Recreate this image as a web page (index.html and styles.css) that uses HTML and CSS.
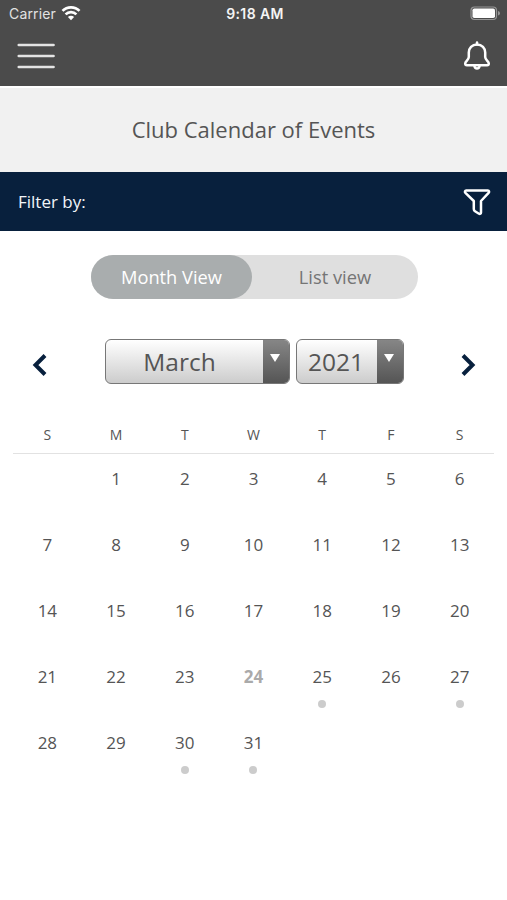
FILE: index.html
```html
<!DOCTYPE html>
<html lang="en">
<head>
<meta charset="utf-8">
<title>Club Calendar of Events</title>
<link rel="stylesheet" href="styles.css">
</head>
<body>
<header class="top">
  <div class="status">
    <div class="carrier"><span class="carrier-name">Carrier</span>
      <svg class="wifi" width="20" height="15" viewBox="0 0 20 15"><g fill="none" stroke="#fff" stroke-width="2.7"><path d="M1.500 4.900a12 12 0 0 1 17 0"/><path d="M4.600 8.400a7.600 7.600 0 0 1 10.800 0"/></g><path fill="#fff" d="M6.900 11a4.400 4.400 0 0 1 6.200 0L10 14.300z"/></svg>
    </div>
    <div class="time">9:18 AM</div>
    <svg class="battery" width="31" height="15" viewBox="0 0 31 15"><rect x="1" y="1" width="25.500" height="12.500" rx="3.500" fill="none" stroke="#969696" stroke-width="1.200"/><rect x="2.500" y="2.500" width="22.500" height="9.500" rx="1.800" fill="#fff"/><path d="M28 5v4.600q2-.6 2-2.300T28 5z" fill="#969696"/></svg>
  </div>
  <nav class="bar">
    <svg width="38" height="28" viewBox="0 0 38 28"><path d="M1.800 3h34.700M1.800 14h34.700M1.800 25h34.700" stroke="#e4e4e4" stroke-width="2.700" stroke-linecap="round"/></svg>
    <svg width="28" height="32" viewBox="0 0 28 32"><g fill="none" stroke="#fff" stroke-width="2.500" stroke-linecap="round" stroke-linejoin="round"><path d="M14 2.500v2"/><path d="M14 4.500c-5 0-8.200 3.500-8.200 8v4.500c0 3-3.600 4.500-3.600 6.500 0 1.200.7 1.700 1.700 1.700h20.200c1 0 1.700-.5 1.700-1.700 0-2-3.600-3.500-3.600-6.500v-4.500c0-4.500-3.200-8-8.200-8z"/><path d="M11.500 26.500a2.600 2.800 0 0 0 5 0"/></g></svg>
  </nav>
</header>
<h1 class="title">Club Calendar of Events</h1>
<section class="filter">
  <span>Filter by:</span>
  <svg width="28" height="28" viewBox="0 0 28 28"><path d="M3.200 2.500h21.600c1.400 0 1.700 1.500.8 2.400L18 13v11.500c0 1.200-1 1.700-2 1.200l-4-2.400c-.8-.5-1.200-1.300-1.200-2.200V13L2.400 4.900c-.9-.9-.5-2.400.8-2.400z" fill="none" stroke="#fff" stroke-width="2.500" stroke-linejoin="round"/></svg>
</section>
<main>
  <div class="toggle"><div class="option active">Month View</div><div class="option">List view</div></div>
  <div class="picker">
    <svg width="16" height="24" viewBox="0 0 16 24"><path d="M13 2.500L3.500 12l9.500 9.500" fill="none" stroke="#08203d" stroke-width="4"/></svg>
    <div class="selects">
      <div class="select month"><span class="value">March</span><span class="drop"><i class="triangle"></i></span></div>
      <div class="select year"><span class="value">2021</span><span class="drop"><i class="triangle"></i></span></div>
    </div>
    <svg width="16" height="24" viewBox="0 0 16 24"><path d="M3 2.500l9.500 9.500L3 21.500" fill="none" stroke="#08203d" stroke-width="4"/></svg>
  </div>
  <div class="week-head"><span>S</span><span>M</span><span>T</span><span>W</span><span>T</span><span>F</span><span>S</span></div>
  <div class="days">
    <div class="day"></div><div class="day">1</div><div class="day">2</div><div class="day">3</div><div class="day">4</div><div class="day">5</div><div class="day">6</div>
    <div class="day">7</div><div class="day">8</div><div class="day">9</div><div class="day">10</div><div class="day">11</div><div class="day">12</div><div class="day">13</div>
    <div class="day">14</div><div class="day">15</div><div class="day">16</div><div class="day">17</div><div class="day">18</div><div class="day">19</div><div class="day">20</div>
    <div class="day">21</div><div class="day">22</div><div class="day">23</div><div class="day today">24</div><div class="day event">25</div><div class="day">26</div><div class="day event">27</div>
    <div class="day">28</div><div class="day">29</div><div class="day event">30</div><div class="day event">31</div>
  </div>
</main>
</body>
</html>
```
FILE: styles.css
```css
* { box-sizing: border-box; }
body { margin: 0; background: #fff; color: #555; font-family: "Open Sans", "Noto Sans", sans-serif; }
svg { display: block; flex: none; }
.top { height: 86px; background: #4b4b4b; }
.status { height: 27px; display: grid; grid-template-columns: 1fr auto 1fr; align-items: center; padding: 0 6px 0 9px; font-family: Inter, sans-serif; font-size: 14px; line-height: 26px; color: #fff; }
.carrier { display: flex; align-items: center; gap: 5px; color: #e2e2e2; }
.carrier-name { letter-spacing: .15px; }
.time { font-weight: 600; font-size: 14px; letter-spacing: .4px; color: #f4f4f4; }
.battery { justify-self: end; }
.bar { display: flex; justify-content: space-between; align-items: center; height: 58px; padding: 0 16px 0 17px; }
.title { margin: 2px 0 0; height: 84px; background: #f1f1f1; text-align: center; font-size: 22px; font-weight: 400; line-height: 82px; }
.filter { height: 59px; background: #08203d; color: #f1f5f9; display: flex; align-items: center; justify-content: space-between; padding: 0 16px 0 18px; font-size: 17px; }
.toggle { display: flex; width: 327px; height: 44px; margin: 24px auto 0 91px; border-radius: 22px; background: #dfdfdf; color: #757575; font-size: 18.3px; line-height: 44px; text-align: center; }
.option { flex: 1; }
.active { flex: 0 0 161px; border-radius: 22px; background: #a9adae; color: #fff; }
.picker { display: flex; align-items: center; justify-content: space-between; height: 44px; margin-top: 40px; padding: 0 31px 0 32px; }
.picker > svg { margin-top: 7px; }
.selects { display: flex; gap: 6px; margin-left: 1px; }
.select { display: flex; height: 45px; border: 1.5px solid #777; border-radius: 6px; overflow: hidden; background: linear-gradient(#fff, #ccc); font-size: 24.5px; line-height: 44px; text-align: center; }
.month { width: 185px; }
.year { width: 108px; }
.value { flex: 1; }
.month .value { padding-right: 10px; }
.year .value { padding-right: 2px; }
.drop { width: 26px; background: linear-gradient(#868686, #555); display: flex; justify-content: center; padding: 14px 2px 0 0; }
.triangle { width: 0; height: 0; border: 5px solid transparent; border-top: 8px solid #fff; border-bottom: 0; }
.week-head, .days { display: grid; grid-template-columns: repeat(7, 1fr); margin: 0 13px; text-align: center; }
.week-head { height: 39px; margin-top: 32px; border-bottom: 1px solid #e2e2e2; font-size: 14px; line-height: 39px; }
.days { grid-auto-rows: 66px; font-size: 17px; line-height: 50px; }
.today { color: #aaa; font-weight: 700; }
.event::after { content: ""; display: block; width: 8px; height: 8px; margin: -2px auto 0; border-radius: 50%; background: #ccc; }
```
